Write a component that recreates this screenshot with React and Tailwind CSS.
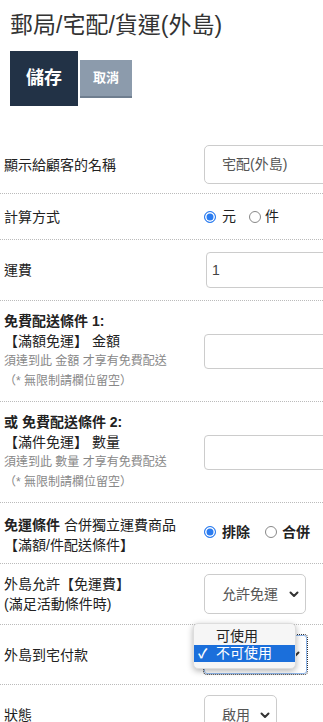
import React from "react";

const Chevron = () => (
  <svg width="10" height="7" viewBox="0 0 10 7" className="flex-none">
    <polyline points="1.5,1.5 5,5 8.5,1.5" fill="none" stroke="#333" strokeWidth="2" strokeLinecap="round" strokeLinejoin="round" />
  </svg>
);

const RadioOn = () => (
  <span className="inline-block w-[12px] h-[12px] rounded-full border border-[#2b7cf0] bg-[#2b7cf0] shadow-[inset_0_0_0_1.5px_white] flex-none" />
);
const RadioOff = () => (
  <span className="inline-block w-[12px] h-[12px] rounded-full border border-[#888] bg-white flex-none" />
);

const Row = ({ className = "", children }) => (
  <div className={"flex items-center border-b border-dotted border-[#bbb] " + className}>{children}</div>
);

const Label = ({ children }) => (
  <div className="w-[204px] flex-none pl-[4px] text-[14px] leading-[20px] text-[#222]">{children}</div>
);

export default function App() {
  return (
    <div className="w-full overflow-hidden bg-white font-['Liberation_Sans','Noto_Sans_CJK_TC',sans-serif] text-[#222]">
      <h1 className="pl-[10px] pt-[10px] text-[23px] leading-[30px] text-[#333] font-normal">郵局/宅配/貨運(外島)</h1>
      <div className="flex items-center gap-[2px] pl-[10px] mt-[11px]">
        <button className="w-[68px] h-[55px] bg-[#223246] text-white text-[18px] font-bold">儲存</button>
        <button className="w-[52px] h-[38px] bg-[#8c9bac] border-b-2 border-[#6f7e8f] text-white text-[13px] font-bold">取消</button>
      </div>

      <div className="mt-[30px]">
        <Row className="py-[9px]">
          <Label>顯示給顧客的名稱</Label>
          <div className="w-[140px] h-[39px] flex-none border border-[#ccc] rounded-[5px] flex items-center pl-[17px] text-[14px] text-[#555]">宅配(外島)</div>
        </Row>

        <Row className="h-[46px]">
          <Label>計算方式</Label>
          <div className="flex items-center text-[14px]">
            <RadioOn />
            <span className="ml-[6px] mr-[13px]">元</span>
            <RadioOff />
            <span className="ml-[4px]">件</span>
          </div>
        </Row>

        <Row className="py-[12px]">
          <Label>運費</Label>
          <div className="ml-[2px] w-[140px] h-[36px] flex-none border border-[#ccc] rounded-[4px] flex items-center pl-[5px] text-[14px] text-[#444]">1</div>
        </Row>

        <Row className="py-[10px]">
          <Label>
            <div className="font-bold">免費配送條件 1:</div>
            <div>【滿額免運】 金額</div>
            <div className="text-[12px] text-[#888]">須達到此 金額 才享有免費配送</div>
            <div className="text-[12px] text-[#888]">（* 無限制請欄位留空）</div>
          </Label>
          <div className="w-[140px] h-[35px] flex-none border border-[#ccc] rounded-[4px]" />
        </Row>

        <Row className="py-[10px]">
          <Label>
            <div className="font-bold">或 免費配送條件 2:</div>
            <div>【滿件免運】 數量</div>
            <div className="text-[12px] text-[#888]">須達到此 數量 才享有免費配送</div>
            <div className="text-[12px] text-[#888]">（* 無限制請欄位留空）</div>
          </Label>
          <div className="w-[140px] h-[35px] flex-none border border-[#ccc] rounded-[4px]" />
        </Row>

        <Row className="pt-[12px] pb-[8px]">
          <Label>
            <div><span className="font-bold">免運條件</span> 合併獨立運費商品</div>
            <div>【滿額/件配送條件】</div>
          </Label>
          <div className="flex items-center text-[14px] font-bold mt-[-6px]">
            <RadioOn />
            <span className="ml-[6px] mr-[15px]">排除</span>
            <RadioOff />
            <span className="ml-[5px]">合併</span>
          </div>
        </Row>

        <Row className="py-[10px]">
          <Label>
            <div>外島允許【免運費】</div>
            <div>(滿足活動條件時)</div>
          </Label>
          <div className="w-[102px] h-[40px] flex-none border border-[#ccc] rounded-[5px] flex items-center pl-[17px] pr-[6px] justify-between text-[14px] text-[#555]">
            <span>允許免運</span>
            <Chevron />
          </div>
        </Row>

        <Row className="py-[10px]">
          <Label>外島到宅付款</Label>
          <div className="relative w-[103px] h-[39px] flex-none">
            <div className="w-full h-full border border-[#8fb6ea] rounded-[3px] outline outline-1 outline-dotted outline-[#333] flex items-center pl-[17px] pr-[6px] justify-end text-[14px] text-[#555]">
              <Chevron />
            </div>
            <div className="absolute left-[-11px] top-[-12px] w-[103px] h-[46px] rounded-[5px] bg-[#f6f6f6] shadow-[0_2px_6px_rgba(0,0,0,0.3)] pt-[4px] text-[14px] text-[#222] border border-[#ddd]">
              <div className="h-[17px] flex items-center pl-[22px]">可使用</div>
              <div className="h-[17px] flex items-center bg-[#1b6fdb] text-white">
                <span className="w-[22px] pl-[4px] text-[13px] font-bold">✓</span>
                <span>不可使用</span>
              </div>
            </div>
          </div>
        </Row>

        <div className="flex items-center pt-[10px]">
          <Label>狀態</Label>
          <div className="w-[73px] h-[40px] flex-none border border-[#ccc] rounded-[5px] flex items-center pl-[17px] pr-[6px] justify-between text-[14px] text-[#555]">
            <span>啟用</span>
            <Chevron />
          </div>
        </div>
      </div>
    </div>
  );
}
